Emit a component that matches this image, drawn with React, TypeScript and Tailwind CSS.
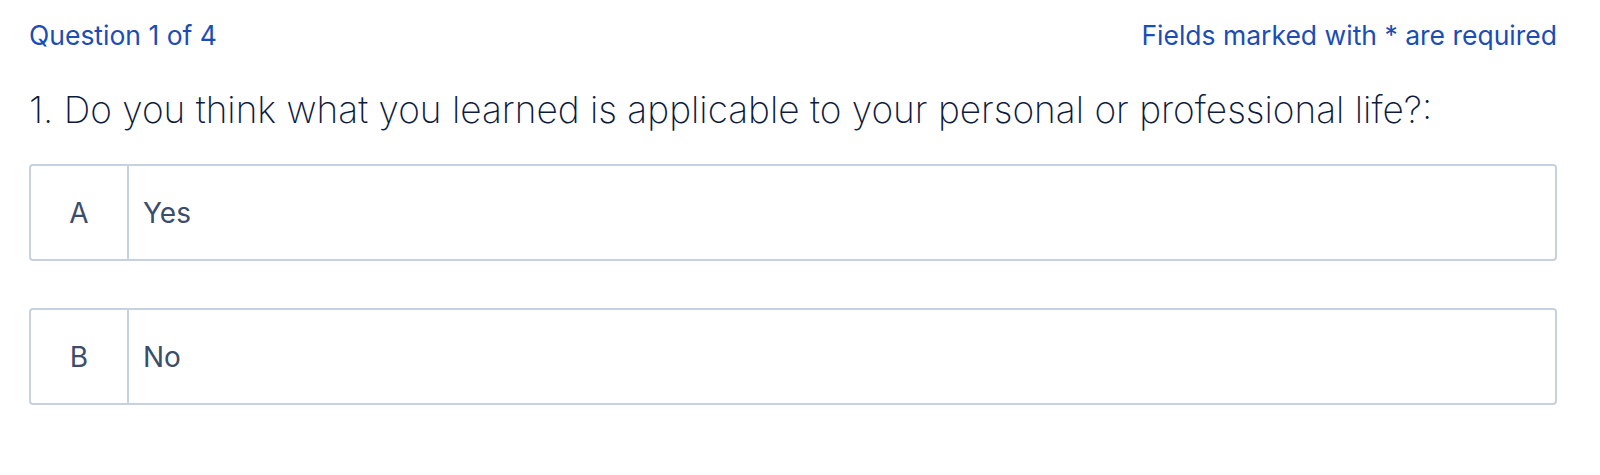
import React from 'react';

const options = [
    { key: 'A', label: 'Yes' },
    { key: 'B', label: 'No' },
];

const App: React.FC = () => {
    return (
        <div
            className="min-h-[475px] w-full bg-white pl-[29px] pr-[43px] pt-[18px]"
            style={{ fontFamily: 'Inter, "Noto Sans", sans-serif' }}
        >
            <div className="flex items-center justify-between text-[26.5px] leading-[34px] text-[#1a4db5]">
                <span>Question 1 of 4</span>
                <span>Fields marked with * are required</span>
            </div>

            <h1 className="mt-[36px] text-[37px] font-extralight leading-[44px] text-[#0c1a3e]">
                1. Do you think what you learned is applicable to your personal or professional life?:
            </h1>

            <div className="mt-[32px] flex flex-col gap-[47px]">
                {options.map((opt) => (
                    <div
                        key={opt.key}
                        className="flex h-[97px] rounded-[4px] border-2 border-[#c8d1e0] bg-white"
                    >
                        <div className="flex w-[98px] shrink-0 items-center justify-center border-r-2 border-[#c8d1e0] text-[28px] text-[#3b4d6b]">
                            {opt.key}
                        </div>
                        <div className="flex items-center pl-[14px] text-[28px] text-[#3b4d6b]">
                            {opt.label}
                        </div>
                    </div>
                ))}
            </div>
        </div>
    );
};

export default App;
